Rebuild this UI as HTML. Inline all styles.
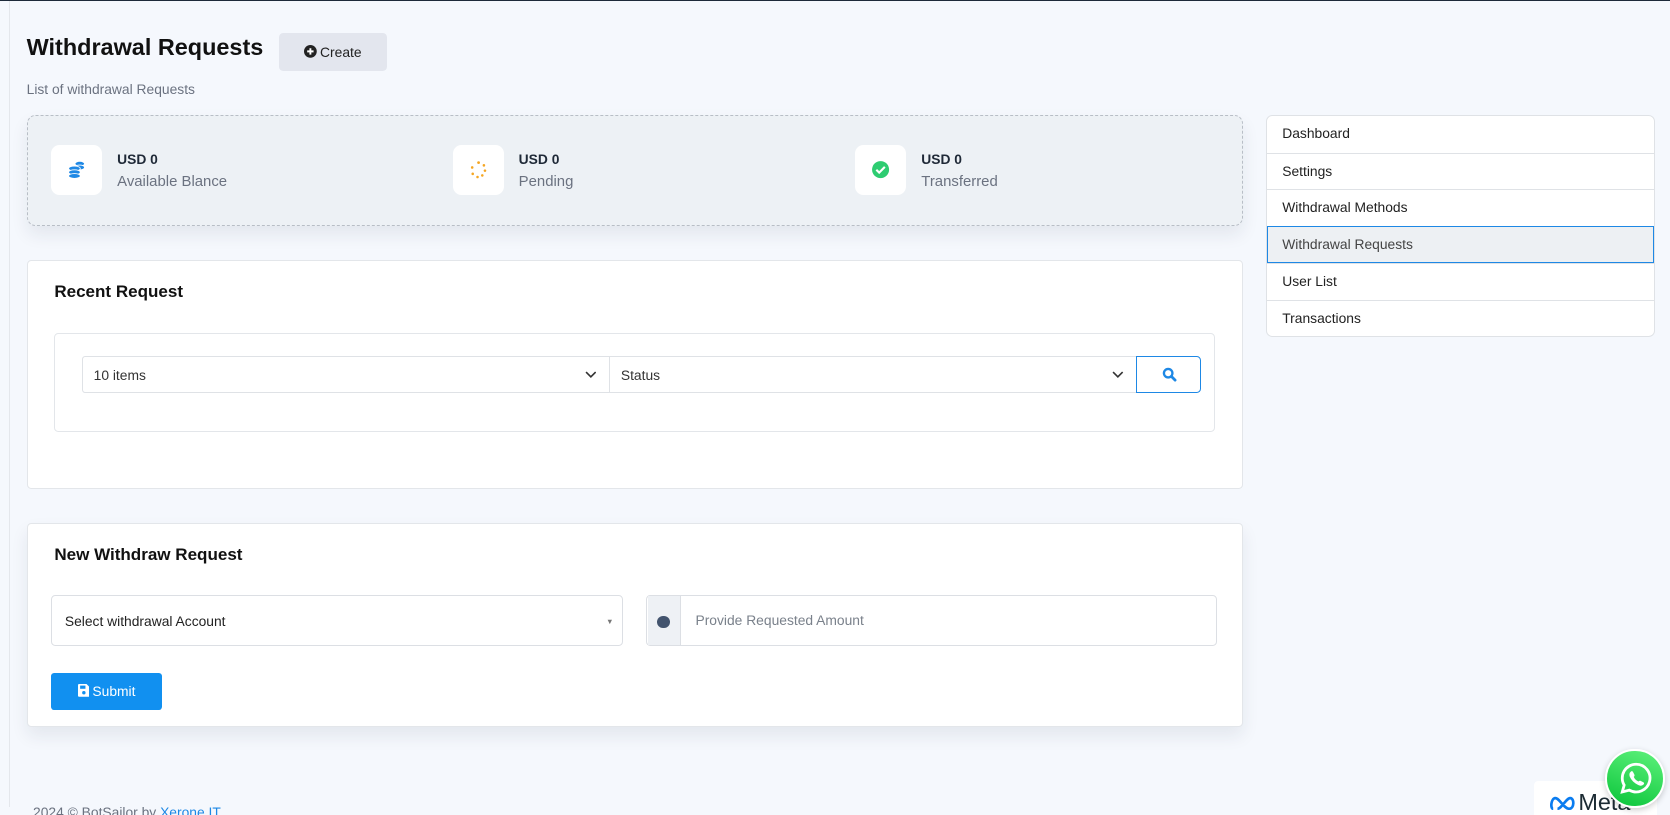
<!DOCTYPE html>
<html><head><meta charset="utf-8"><style>
*{box-sizing:border-box;margin:0;padding:0}
html,body{width:1670px;height:815px;overflow:hidden;background:#f5f8fd;font-family:"Liberation Sans","DejaVu Sans",sans-serif}
#w{position:relative;width:1568px;height:765px;zoom:1.06505;overflow:hidden}
.a{position:absolute}
.card{background:#fff;border:1px solid #e3e6ea;border-radius:4px}
.sb{left:1189px;width:365px;border:1px solid #dfe2e6;border-radius:6px;background:#fff;top:108px;overflow:hidden}
.sb div{height:34.5px;line-height:33px;padding-left:14px;font-size:13px;color:#222;border-top:1px solid #dfe2e6}
.sb div:first-child{border-top:none}
.sb .act{background:#edf0f3;color:#444;outline:1px solid #1e88e5;outline-offset:-1px}
.st{width:48px;height:47px;background:#fff;border-radius:8px}
.v{font-size:13px;font-weight:bold;color:#1f2937}
.l{font-size:14px;color:#6b7280}
</style></head><body><div id="w">
<div class="a" style="left:0;top:0;width:1568px;height:1px;background:#1d2a3a"></div>
<div class="a" style="left:8px;top:1px;width:1px;height:757px;background:#e4e7ec"></div>

<div class="a" style="left:25px;top:32px;font-size:22px;font-weight:bold;color:#111">Withdrawal Requests</div>
<div class="a" style="left:262px;top:31px;width:101px;height:36px;background:#e3e6ee;border-radius:4px;font-size:13px;color:#222;line-height:36px;text-align:center">
<svg width="12" height="12" viewBox="0 0 12 12" style="vertical-align:-1px;margin-right:3px"><circle cx="6" cy="6" r="6" fill="#222"/><path d="M6 3v6M3 6h6" stroke="#fff" stroke-width="1.8"/></svg>Create</div>
<div class="a" style="left:25px;top:76px;font-size:13px;color:#6b7280">List of withdrawal Requests</div>

<div class="a" style="left:25px;top:108px;width:1142px;height:104px;background:#edf1f5;border:1px dashed #b8bec6;border-radius:8px;box-shadow:0 8px 16px rgba(30,40,60,.08)"></div>
<div class="a st" style="left:48px;top:136px"><svg class="a" style="left:15px;top:14px" width="18" height="18" viewBox="0 0 18 18"><g fill="#1e88e5" stroke="#fff" stroke-width=".8"><ellipse cx="12" cy="3.5" rx="4.5" ry="2.2"/><ellipse cx="12" cy="7" rx="4.5" ry="2.2"/><ellipse cx="7" cy="8" rx="5.5" ry="2.3"/><ellipse cx="7" cy="11.5" rx="5.5" ry="2.3"/><ellipse cx="7" cy="15" rx="5.5" ry="2.3"/></g></svg></div>
<div class="a v" style="left:110px;top:142px">USD 0</div><div class="a l" style="left:110px;top:163px">Available Blance</div>
<div class="a st" style="left:425px;top:136px"><svg class="a" style="left:15px;top:14px" width="18" height="18" viewBox="0 0 18 18" fill="#f5a623"><circle cx="9" cy="2.5" r="1.3"/><circle cx="14" cy="5" r="1.2"/><circle cx="15" cy="10" r="1.2"/><circle cx="12.5" cy="14.5" r="1.2"/><circle cx="8" cy="16" r="1.2"/><circle cx="3.5" cy="13" r="1.2"/><circle cx="3" cy="7" r="1.2"/></svg></div>
<div class="a v" style="left:487px;top:142px">USD 0</div><div class="a l" style="left:487px;top:163px">Pending</div>
<div class="a st" style="left:803px;top:136px"><svg class="a" style="left:15px;top:14px" width="18" height="18" viewBox="0 0 18 18"><circle cx="9" cy="9" r="8" fill="#2ecc71"/><path d="M5 9.2l2.7 2.7L13 6.5" stroke="#fff" stroke-width="2" fill="none"/></svg></div>
<div class="a v" style="left:865px;top:142px">USD 0</div><div class="a l" style="left:865px;top:163px">Transferred</div>

<div class="a card" style="left:25px;top:244px;width:1142px;height:215px"></div>
<div class="a" style="left:51px;top:265px;font-size:16px;font-weight:bold;color:#111">Recent Request</div>
<div class="a card" style="left:51px;top:313px;width:1090px;height:93px"></div>
<div class="a" style="left:77px;top:334px;width:496px;height:35px;border:1px solid #dfe2e6;border-radius:3px 0 0 3px;background:#fff;font-size:13px;color:#333;line-height:34px;padding-left:10px">10 items
<svg class="a" style="right:12px;top:13px" width="11" height="7" viewBox="0 0 11 7"><path d="M1 1l4.5 4.5L10 1" stroke="#333" stroke-width="1.5" fill="none"/></svg></div>
<div class="a" style="left:572px;top:334px;width:496px;height:35px;border:1px solid #dfe2e6;background:#fff;font-size:13px;color:#333;line-height:34px;padding-left:10px">Status
<svg class="a" style="right:12px;top:13px" width="11" height="7" viewBox="0 0 11 7"><path d="M1 1l4.5 4.5L10 1" stroke="#333" stroke-width="1.5" fill="none"/></svg></div>
<div class="a" style="left:1067px;top:334px;width:61px;height:35px;border:1px solid #1e88e5;border-radius:0 4px 4px 0;background:#fff">
<svg class="a" style="left:23px;top:10px" width="14" height="14" viewBox="0 0 14 14"><circle cx="5.8" cy="5.8" r="4" stroke="#1e88e5" stroke-width="2.2" fill="none"/><path d="M8.8 8.8l3.5 3.5" stroke="#1e88e5" stroke-width="2.6" stroke-linecap="round"/></svg></div>

<div class="a card" style="left:25px;top:491px;width:1142px;height:192px;box-shadow:0 8px 16px rgba(30,40,60,.08)"></div>
<div class="a" style="left:51px;top:512px;font-size:16px;font-weight:bold;color:#111">New Withdraw Request</div>
<div class="a" style="left:48px;top:559px;width:537px;height:48px;border:1px solid #dcdfe4;border-radius:4px;background:#fff;font-size:13px;color:#222;line-height:48px;padding-left:12px">Select withdrawal Account<span class="a" style="right:8px;top:0;font-size:7px;color:#777">▼</span></div>
<div class="a" style="left:607px;top:559px;width:536px;height:48px;border:1px solid #dcdfe4;border-radius:4px;background:#fff"></div>
<div class="a" style="left:608px;top:560px;width:31px;height:46px;background:#eef1f5;border-right:1px solid #dcdfe4"><div class="a" style="left:9px;top:18px;width:12px;height:12px;border-radius:50%;background:#43546e"></div></div>
<div class="a" style="left:653px;top:575px;font-size:13px;color:#7a818b">Provide Requested Amount</div>
<div class="a" style="left:48px;top:632px;width:104px;height:35px;background:#1190f0;border-radius:3px;color:#fff;font-size:13px;line-height:35px;text-align:center">
<svg width="11" height="12" viewBox="0 0 11 12" style="vertical-align:-1px;margin-right:3px"><path d="M0 1q0-1 1-1h7l3 3v8q0 1-1 1H1q-1 0-1-1z" fill="#fff"/><rect x="2" y="1.5" width="5" height="3" fill="#1190f0"/><circle cx="5.5" cy="8.2" r="1.6" fill="#1190f0"/></svg>Submit</div>

<div class="a sb"><div>Dashboard</div><div>Settings</div><div>Withdrawal Methods</div><div class="act">Withdrawal Requests</div><div>User List</div><div>Transactions</div></div>

<div class="a" style="left:31px;top:755px;font-size:13px;color:#6b7280">2024 © BotSailor by <span style="color:#1e88e5">Xerone IT</span></div>
<div class="a" style="left:1440px;top:733px;width:116px;height:40px;background:#fff;border-radius:4px"></div>
<svg class="a" style="left:1455px;top:747px" width="26" height="14" viewBox="0 0 26 14"><path d="M3 12C0 12 1 2 5 2s8 10 13 10 5-10 1-10-8 10-12 10" stroke="#0a7cf0" stroke-width="2.5" fill="none"/></svg>
<div class="a" style="left:1482px;top:741px;font-size:22px;color:#1c2b33">Meta</div>
<div class="a" style="left:1507px;top:703px;width:56px;height:56px;border-radius:50%;background:linear-gradient(200deg,#5ff27c,#0ac43a);border:2px solid #fff;box-shadow:0 2px 6px rgba(0,0,0,.2)">
<svg class="a" style="left:10px;top:9px" width="34" height="34" viewBox="0 0 34 34"><path d="M17 4a13 13 0 0 0-11.2 19.6L4 30l6.6-1.7A13 13 0 1 0 17 4z" stroke="#fff" stroke-width="2.6" fill="none"/><path d="M12 11q1-1 2 0l1.5 3q.3 1-.7 1.8 1.3 3 4.4 4.4.8-1 1.8-.7l3 1.5q1 1 0 2-2 2-5 .5-6-3-8-8-1-3 1-4.5z" fill="#fff"/></svg></div>
</div></body></html>
